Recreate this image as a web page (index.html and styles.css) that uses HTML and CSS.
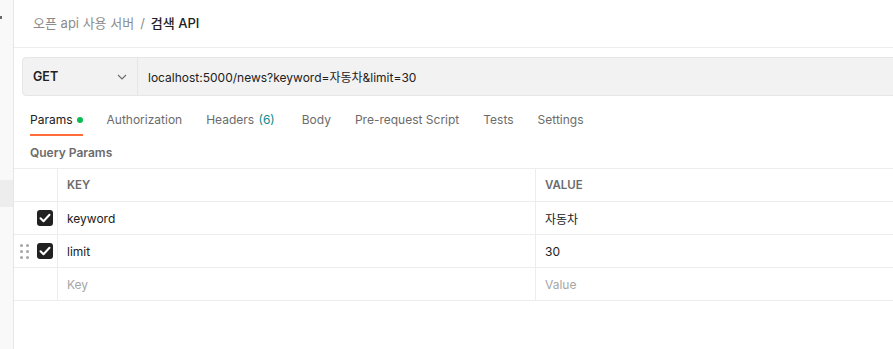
FILE: index.html
```html
<!DOCTYPE html>
<html lang="ko">
<head>
<meta charset="utf-8">
<link rel="stylesheet" href="styles.css">
</head>
<body>
<div class="app">
  <aside class="rail">
    <span class="rail-dot"></span>
    <span class="rail-sel"></span>
  </aside>
  <main class="main">
    <div class="crumbs">
      <span class="crumb-parent">오픈 api 사용 서버</span>
      <span class="crumb-sep">/</span>
      <span class="crumb-current">검색 API</span>
    </div>
    <div class="urlbar">
      <div class="method">
        <span>GET</span>
        <svg class="chev" width="10" height="6" viewBox="0 0 10 6"><path d="M1 1l4 4 4-4" fill="none" stroke="#6b6b6b" stroke-width="1.1"/></svg>
      </div>
      <div class="url">localhost:5000/news?keyword=자동차&amp;limit=30</div>
    </div>
    <nav class="tabs">
      <span class="tab active">Params<span class="dot"></span></span>
      <span class="tab">Authorization</span>
      <span class="tab tab-headers">Headers <span class="count">(6)</span></span>
      <span class="tab">Body</span>
      <span class="tab">Pre-request Script</span>
      <span class="tab">Tests</span>
      <span class="tab">Settings</span>
    </nav>
    <div class="section-title">Query Params</div>
    <div class="table">
      <div class="row head">
        <div class="cell c0"></div>
        <div class="cell c1">KEY</div>
        <div class="cell c2">VALUE</div>
      </div>
      <div class="row">
        <div class="cell c0"><span class="cb"><svg width="12" height="10" viewBox="0 0 12 10"><path d="M1.5 5.2l3 3 6-6.4" fill="none" stroke="#fff" stroke-width="2" stroke-linecap="round" stroke-linejoin="round"/></svg></span></div>
        <div class="cell c1">keyword</div>
        <div class="cell c2">자동차</div>
      </div>
      <div class="row">
        <div class="cell c0">
          <span class="grip"><i></i><i></i><i></i><i></i><i></i><i></i></span>
          <span class="cb"><svg width="12" height="10" viewBox="0 0 12 10"><path d="M1.5 5.2l3 3 6-6.4" fill="none" stroke="#fff" stroke-width="2" stroke-linecap="round" stroke-linejoin="round"/></svg></span>
        </div>
        <div class="cell c1">limit</div>
        <div class="cell c2">30</div>
      </div>
      <div class="row">
        <div class="cell c0"></div>
        <div class="cell c1 ph">Key</div>
        <div class="cell c2 ph">Value</div>
      </div>
    </div>
  </main>
</div>
</body>
</html>
```
FILE: styles.css
```css
* { box-sizing: border-box; }
html, body { margin: 0; padding: 0; }
body {
  width: 893px;
  height: 349px;
  overflow: hidden;
  background: #fff;
  font-family: Inter, "Noto Sans CJK KR", sans-serif;
  font-size: 12px;
  color: #212121;
}
.app { display: flex; height: 349px; }
.rail {
  width: 14px;
  flex: none;
  background: #f9f9f9;
  border-right: 1px solid #e6e6e6;
  position: relative;
}
.rail-dot {
  position: absolute;
  left: 0; top: 16px;
  width: 2px; height: 3px;
  background: #6b6b6b;
}
.rail-sel {
  position: absolute;
  left: 0; top: 180px;
  width: 13px; height: 27px;
  background: #ededed;
}
.main { flex: 1; min-width: 0; overflow: hidden; }
.crumbs {
  height: 48px;
  border-bottom: 1px solid #ededed;
  padding: 14px 0 0 19px;
  display: flex;
  gap: 6px;
  line-height: 18px;
  font-size: 13px;
}
.crumb-parent { color: #8c8c8c; }
.crumb-sep { color: #8c8c8c; }
.crumb-current { color: #212121; font-weight: 500; }
.urlbar {
  margin: 9px -20px 0 8px;
  height: 39px;
  background: #f2f2f2;
  border: 1px solid #e6e6e6;
  border-radius: 4px;
  display: flex;
}
.method {
  width: 115px;
  border-right: 1px solid #e6e6e6;
  display: flex;
  align-items: center;
  justify-content: space-between;
  padding: 0 10px 0 10px;
  font-weight: 600;
  font-size: 12.5px;
  color: #212121;
}
.url {
  display: flex;
  align-items: center;
  padding-left: 10px;
  color: #212121;
}
.tabs {
  display: flex;
  padding-left: 4px;
  height: 40px;
}
.tab {
  color: #6b6b6b;
  padding: 16px 12px 0;
  line-height: 16px;
  position: relative;
}
.tab-headers { padding-right: 15px; }
.tab.active { color: #212121; }
.tab.active::after {
  content: "";
  position: absolute;
  left: 12px; right: 12px; bottom: 0;
  height: 2px;
  background: #ff6c37;
}
.dot {
  display: inline-block;
  width: 6px; height: 6px;
  border-radius: 50%;
  background: #0cbb52;
  margin-left: 4px;
  vertical-align: 1px;
}
.count { color: #0f8a8a; margin-left: 1px; }
.section-title {
  padding: 9px 0 0 16px;
  height: 32px;
  font-weight: 600;
  color: #6b6b6b;
  line-height: 16px;
}
.table { border-top: 1px solid #ededed; }
.row {
  display: flex;
  height: 33px;
  border-bottom: 1px solid #ededed;
}
.cell {
  display: flex;
  align-items: center;
}
.c0 {
  width: 44px;
  border-right: 1px solid #ededed;
  justify-content: flex-end;
  padding-right: 4px;
  gap: 8px;
}
.c1 {
  width: 478px;
  border-right: 1px solid #ededed;
  padding-left: 9px;
}
.c2 { flex: 1; padding-left: 9px; }
.head .cell { font-weight: 600; font-size: 11.5px; color: #6b6b6b; }
.ph { color: #a6a6a6; }
.cb {
  width: 16px; height: 16px;
  border-radius: 3px;
  background: #212121;
  display: flex;
  align-items: center;
  justify-content: center;
}
.grip {
  display: grid;
  grid-template-columns: 3px 3px;
  gap: 3px;
}
.grip i {
  display: block;
  width: 3px; height: 3px;
  border-radius: 50%;
  background: #a6a6a6;
}
```
